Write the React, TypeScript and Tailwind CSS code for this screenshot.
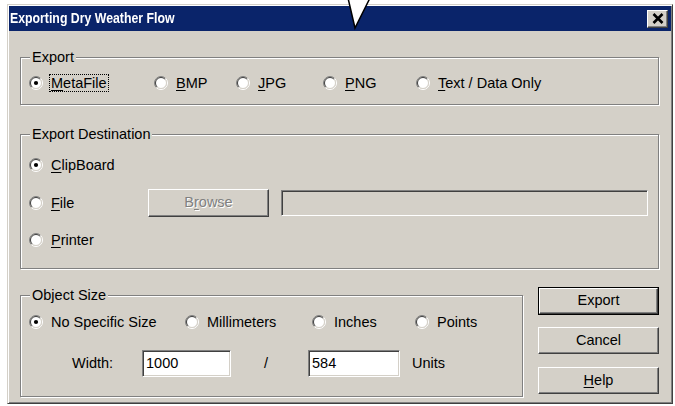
import React from 'react';

type Children = { children?: React.ReactNode };

// classic 3D radio bullet
const Radio = ({ checked }: { checked?: boolean }) => (
  <svg width="14" height="14" viewBox="0 0 14 14" className="shrink-0">
    <circle cx="7" cy="7" r="5.5" fill="#fff" />
    <path d="M2.4 11.6A6.5 6.5 0 0 1 11.6 2.4" stroke="#808080" fill="none" />
    <path d="M11.6 2.4A6.5 6.5 0 0 1 2.4 11.6" stroke="#fff" fill="none" />
    <path d="M3.1 10.9A5.5 5.5 0 0 1 10.9 3.1" stroke="#404040" fill="none" />
    <path d="M10.9 3.1A5.5 5.5 0 0 1 3.1 10.9" stroke="#D4D0C8" fill="none" />
    {checked && <circle cx="7" cy="7" r="2.1" fill="#000" />}
  </svg>
);

const U = ({ children }: Children) => <span className="underline underline-offset-[2px]">{children}</span>;

const RadioItem = ({
  checked,
  focused,
  className = '',
  children,
}: Children & { checked?: boolean; focused?: boolean; className?: string }) => (
  <div className={`flex items-center h-[20px] ${className}`}>
    <Radio checked={checked} />
    {focused ? (
      <span className="ml-[6px] border border-dotted border-black px-[1px] leading-[16px]">{children}</span>
    ) : (
      <span className="ml-[8px] leading-[16px]">{children}</span>
    )}
  </div>
);

const GroupBox = ({ title, className = '', children }: Children & { title: string; className?: string }) => (
  <div className={`relative border border-[#808080] shadow-[inset_1px_1px_0_#fff,1px_1px_0_#fff] ${className}`}>
    <span className="absolute -top-[9px] left-[9px] bg-[#D4D0C8] px-[2px] leading-[16px]">{title}</span>
    {children}
  </div>
);

const Button = ({ isDefault, className = '', children }: Children & { isDefault?: boolean; className?: string }) => {
  const face = (
    <div className="flex items-center justify-center w-full h-full border border-t-white border-l-white border-r-[#404040] border-b-[#404040] shadow-[inset_-1px_-1px_0_#808080]">
      {children}
    </div>
  );
  return isDefault ? (
    <div className={`border border-black ${className}`}>{face}</div>
  ) : (
    <div className={className}>{face}</div>
  );
};

const Field = ({ value, disabled, className = '' }: { value?: string; disabled?: boolean; className?: string }) => (
  <div
    className={`flex items-center pl-[3px] border border-t-[#808080] border-l-[#808080] border-r-white border-b-white shadow-[inset_1px_1px_0_#404040,inset_-1px_-1px_0_#D4D0C8] ${
      disabled ? 'bg-[#D4D0C8]' : 'bg-white'
    } ${className}`}
  >
    {value}
  </div>
);

export default function App() {
  return (
    <div className="relative w-[675px] h-[406px] overflow-hidden bg-white pl-[7px] pt-[4px] font-['Liberation_Sans',Arial,sans-serif] text-[14.5px] text-black">
      <div className="w-[666px] h-[400px] bg-[#D4D0C8] border border-t-[#D4D0C8] border-l-[#D4D0C8] border-r-[#404040] border-b-[#404040] p-[1px] shadow-[inset_1px_1px_0_#fff,inset_-1px_-1px_0_#808080]">
        {/* caption */}
        <div className="flex items-center h-[25px] bg-[#0A246A] pl-[1px] pr-[3px]">
          <span className="inline-block origin-left scale-x-[0.82] whitespace-nowrap text-white font-bold text-[15px]">
            Exporting Dry Weather Flow
          </span>
          <div className="ml-auto w-[21px] h-[18px] bg-[#D4D0C8] border border-t-white border-l-white border-r-[#404040] border-b-[#404040] shadow-[inset_-1px_-1px_0_#808080] flex items-center justify-center">
            <svg width="12" height="11" viewBox="0 0 12 11">
              <path d="M1.5 1L10.5 10M10.5 1L1.5 10" stroke="#000" strokeWidth="2.6" />
            </svg>
          </div>
        </div>

        <div className="px-[11px]">
          <GroupBox title="Export" className="mt-[26px] w-[639px] h-[48px]">
            <div className="flex pl-[8px] pt-[15px]">
              <RadioItem checked focused className="w-[125px]">
                <U>M</U>etaFile
              </RadioItem>
              <RadioItem className="w-[82px]">
                <U>B</U>MP
              </RadioItem>
              <RadioItem className="w-[87px]">
                <U>J</U>PG
              </RadioItem>
              <RadioItem className="w-[93px]">
                <U>P</U>NG
              </RadioItem>
              <RadioItem>
                <U>T</U>ext / Data Only
              </RadioItem>
            </div>
          </GroupBox>

          <GroupBox title="Export Destination" className="mt-[29px] w-[639px] h-[135px]">
            <div className="flex flex-col pl-[8px] pt-[16px]">
              <div className="flex items-center h-[28px]">
                <RadioItem checked>
                  <U>C</U>lipBoard
                </RadioItem>
              </div>
              <div className="flex items-center h-[28px] mt-[10px]">
                <RadioItem className="w-[119px]">
                  <U>F</U>ile
                </RadioItem>
                <Button className="w-[121px] h-[28px]">
                  <span className="text-[#808080] [text-shadow:1px_1px_0_#fff]">
                    B<U>r</U>owse
                  </span>
                </Button>
                <Field disabled className="ml-[12px] w-[367px] h-[26px]" />
              </div>
              <div className="flex items-center h-[28px] mt-[9px]">
                <RadioItem>
                  <U>P</U>rinter
                </RadioItem>
              </div>
            </div>
          </GroupBox>

          <div className="flex items-start mt-[18px]">
            <GroupBox title="Object Size" className="mt-[8px] w-[503px] h-[102px]">
              <div className="flex pl-[8px] pt-[16px]">
                <RadioItem checked className="w-[156px]">
                  No Specific Size
                </RadioItem>
                <RadioItem className="w-[127px]">Millimeters</RadioItem>
                <RadioItem className="w-[103px]">Inches</RadioItem>
                <RadioItem>Points</RadioItem>
              </div>
              <div className="flex items-center pl-[51px] mt-[18px]">
                <span className="w-[70px]">Width:</span>
                <Field value="1000" className="w-[89px] h-[27px]" />
                <span className="w-[77px] pl-[33px]">/</span>
                <Field value="584" className="w-[92px] h-[27px]" />
                <span className="ml-[12px]">Units</span>
              </div>
            </GroupBox>

            <div className="flex flex-col ml-[15px]">
              <Button isDefault className="w-[121px] h-[28px]">
                Export
              </Button>
              <Button className="w-[121px] h-[27px] mt-[12px]">Cancel</Button>
              <Button className="w-[121px] h-[27px] mt-[13px]">
                <U>H</U>elp
              </Button>
            </div>
          </div>
        </div>
      </div>

      {/* pointer callout over the caption */}
      <svg className="absolute left-[346px] top-0" width="26" height="31" viewBox="0 0 26 31">
        <polygon points="2,-2 24,-2 9,28" fill="#fff" stroke="#000" strokeWidth="1.5" />
      </svg>
    </div>
  );
}
